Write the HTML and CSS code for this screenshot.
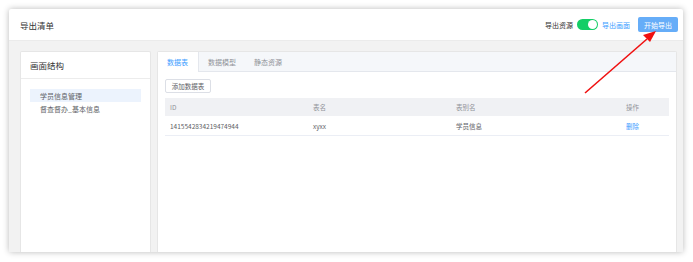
FILE: index.html
```html
<!DOCTYPE html>
<html lang="zh">
<head>
<meta charset="utf-8">
<link rel="stylesheet" href="styles.css">
</head>
<body>
<div class="window">
  <div class="header">
    <div class="title">导出清单</div>
    <div class="actions">
      <span class="label">导出资源</span>
      <span class="switch"><span class="knob"></span></span>
      <span class="link">导出画面</span>
      <span class="btn-primary">开始导出</span>
    </div>
  </div>
  <div class="body">
    <div class="card left">
      <div class="card-title">画面结构</div>
      <div class="tree">
        <div class="node active">学员信息管理</div>
        <div class="node">督查督办_基本信息</div>
      </div>
    </div>
    <div class="card right">
      <div class="tabs">
        <div class="tab active">数据表</div>
        <div class="tab">数据模型</div>
        <div class="tab">静态资源</div>
      </div>
      <div class="pane">
        <div class="btn">添加数据表</div>
        <div class="table">
          <div class="row head">
            <div class="c c1">ID</div>
            <div class="c c2">表名</div>
            <div class="c c3">表别名</div>
            <div class="c c4">操作</div>
          </div>
          <div class="row">
            <div class="c c1">1415542834219474944</div>
            <div class="c c2">xyxx</div>
            <div class="c c3">学员信息</div>
            <div class="c c4"><span class="del">删除</span></div>
          </div>
        </div>
      </div>
    </div>
  </div>
</div>
<svg class="arrow" width="693" height="262" viewBox="0 0 693 262">
  <line x1="585" y1="93" x2="647" y2="39" stroke="#f01010" stroke-width="1.6"/>
  <polygon points="656,31 643,35 650,42" fill="#f01010"/>
</svg>
</body>
</html>
```
FILE: styles.css
```css
* { box-sizing: border-box; }
html, body { margin: 0; padding: 0; background: #fff; }
body {
  font-family: "Noto Sans CJK SC", "Noto Sans", sans-serif;
  color: #606266;
  width: 693px;
  height: 262px;
  overflow: hidden;
  position: relative;
}
.window {
  position: relative;
  margin: 9px 0 0 9px;
  width: 674px;
  height: 243px;
  background: #fff;
  border-radius: 2px;
  box-shadow: 0 0 6px rgba(0,0,0,0.28);
  display: flex;
  flex-direction: column;
}
.header {
  height: 32px;
  border-bottom: 1px solid #ebebeb;
  display: flex;
  align-items: center;
  justify-content: space-between;
  padding: 0 5px 0 11px;
}
.title { font-size: 8.5px; color: #333; }
.actions { display: flex; align-items: center; }
.label { font-size: 7px; color: #333; margin-right: 4px; }
.switch {
  width: 21px; height: 11px; border-radius: 6px;
  background: #13ce66; position: relative; margin-right: 4px;
}
.knob {
  position: absolute; right: 1px; top: 1px;
  width: 9px; height: 9px; border-radius: 50%; background: #fff;
}
.link { font-size: 7px; color: #409eff; margin-right: 8px; }
.btn-primary {
  width: 40px; height: 15px; border-radius: 2px;
  background: #66adf8; color: #fff; font-size: 7px;
  display: flex; align-items: center; justify-content: center;
}
.body {
  flex: 1;
  background: #f2f2f2;
  display: flex;
  gap: 6px;
  padding: 10px 6px 0 11px;
  min-height: 0;
}
.card {
  background: #fff;
  border: 1px solid #e6e6e6;
  border-bottom: none;
  border-radius: 2px 2px 0 0;
}
.left { width: 131px; }
.card-title {
  height: 27px;
  border-bottom: 1px solid #ececec;
  font-size: 8.5px; color: #333;
  display: flex; align-items: center;
  padding-left: 9px;
}
.tree { padding: 10px 9px; }
.node {
  height: 13px; font-size: 7px; color: #606266;
  display: flex; align-items: center; padding-left: 10px;
}
.node.active { background: #ecf3fd; }
.right { flex: 1; }
.tabs {
  height: 20px;
  background: #f5f7fa;
  border-bottom: 1px solid #e4e7ed;
  display: flex;
}
.tab {
  font-size: 7px; color: #909399;
  display: flex; align-items: center;
  white-space: nowrap;
  padding: 0 9px;
  height: 20px;
}
.tab + .tab + .tab { padding-left: 9px; }
.tab.active {
  background: #fff; color: #409eff;
  width: 41px; height: 20px;
  border-right: 1px solid #e4e7ed;
}
.pane { padding: 7px 7px 0 7px; }
.btn {
  width: 46px; height: 14px;
  border: 1px solid #dcdfe6; border-radius: 2px;
  font-size: 6.5px; color: #606266;
  display: flex; align-items: center; justify-content: center;
}
.table { margin-top: 5px; }
.row {
  display: flex; height: 20px; align-items: center;
  border-bottom: 1px solid #ebeef5;
  font-size: 6.5px; color: #606266;
}
.row.head { background: #f0f1f4; height: 18px; border-bottom: none; color: #909399; }
.c { padding-left: 5px; }
.c1 { width: 143px; }
.c2 { width: 143px; }
.c3 { width: 170px; }
.c4 { flex: 1; }
.del { color: #409eff; }
.arrow { position: absolute; left: 0; top: 0; pointer-events: none; }
```
